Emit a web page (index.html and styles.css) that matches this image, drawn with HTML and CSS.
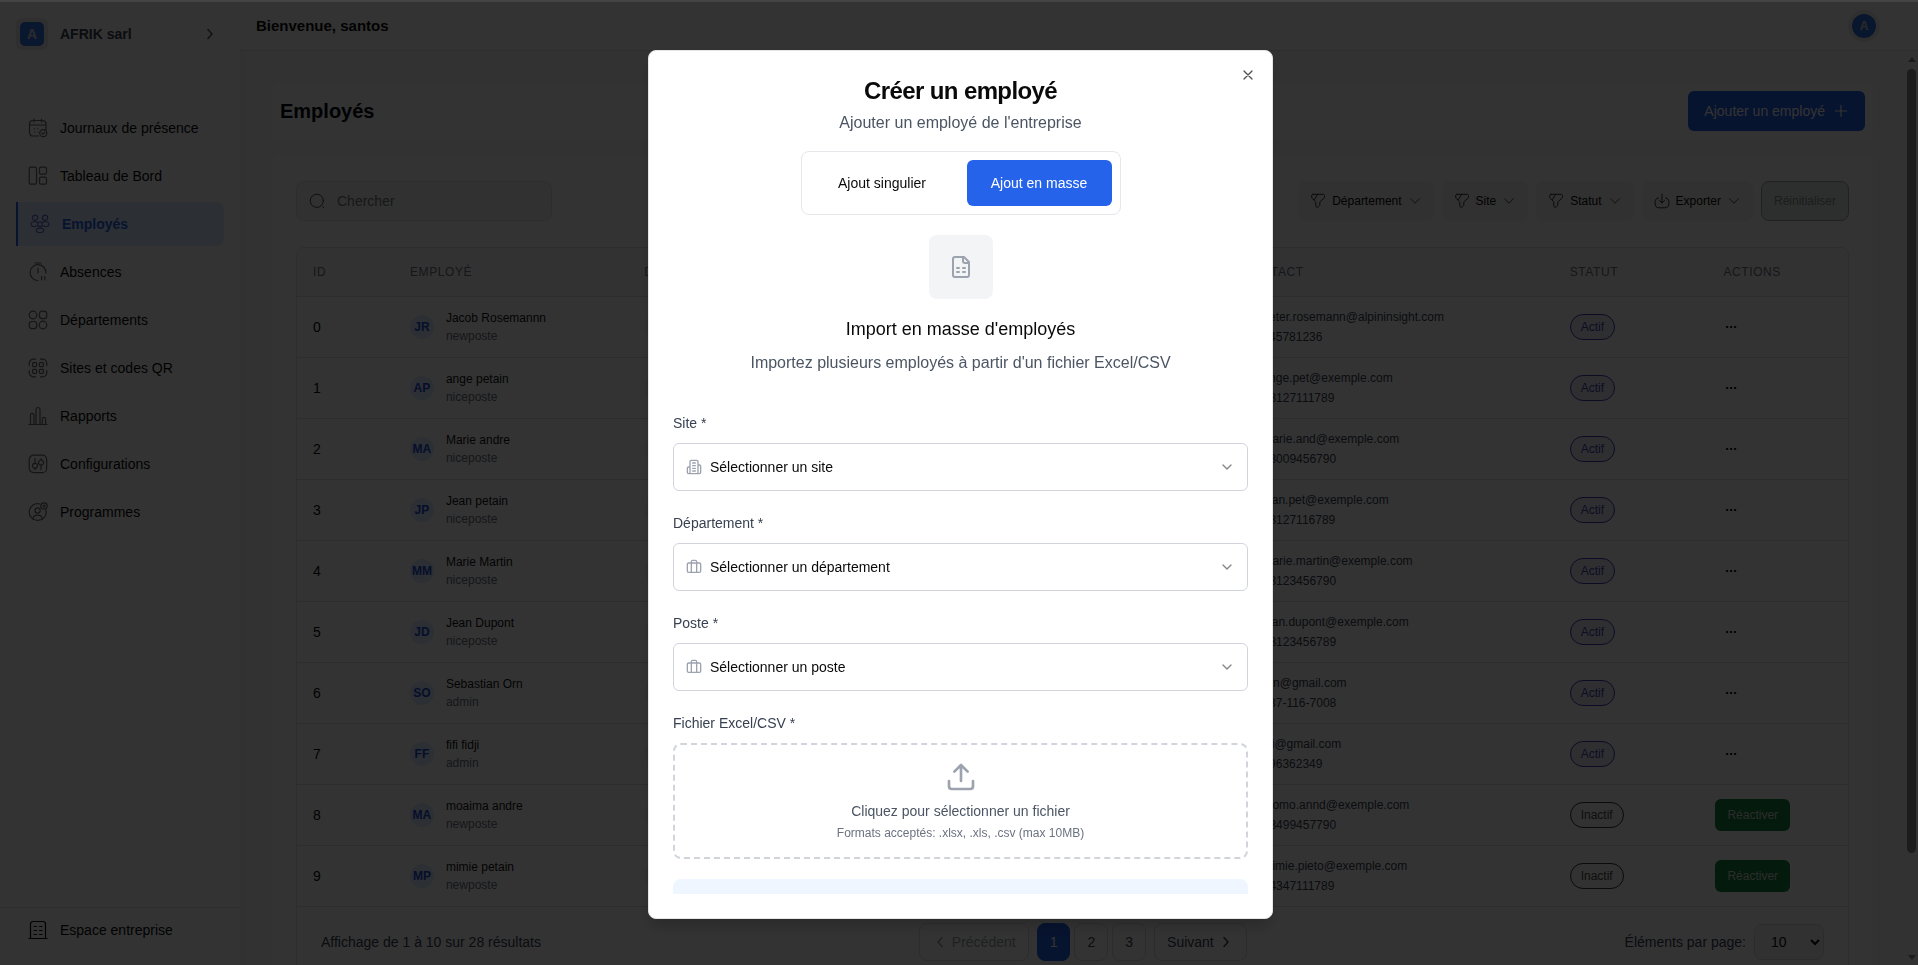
FILE: index.html
```html
<!DOCTYPE html>
<html lang="fr">
<head>
<meta charset="utf-8">
<title>Employés</title>
<link rel="stylesheet" href="styles.css">
</head>
<body>
<svg class="sprite" aria-hidden="true">
  <symbol id="i-calendar" viewBox="0 0 20 20"><path d="M10.500 18H5a3.500 3.500 0 0 1-3.500-3.500V6A3.500 3.500 0 0 1 5 2.500h9.500A3.500 3.500 0 0 1 18 6v5.500M1.500 7H18M6 1v3M13.500 1v3M6.500 10.800h.1M9.800 10.800h.1M6.500 14h.1M9.800 14h.1"/><circle cx="15.200" cy="15.200" r="3.500"/><path d="m13.800 15.200 1 1 1.800-1.900"/></symbol>
  <symbol id="i-layout" viewBox="0 0 20 20"><rect x="1.200" y="1.200" width="7.300" height="17" rx="1.500"/><rect x="11.500" y="1.200" width="7" height="7" rx="1.500"/><rect x="11.500" y="11.200" width="7" height="7" rx="1.500"/></symbol>
  <symbol id="i-team" viewBox="0 0 20 20"><circle cx="5" cy="3.800" r="2.600"/><circle cx="15" cy="3.800" r="2.600"/><circle cx="10" cy="10.200" r="2.300"/><ellipse cx="10" cy="16.300" rx="3.600" ry="2.400"/><path d="M6.500 11.800c-.8.700-1.800.7-2.700.7C2 12.500 1 11.500 1 10s1.500-2.500 3.500-2.500c1.200 0 2.300.4 2.900 1.100M13.500 11.800c.8.700 1.800.7 2.700.7 1.800 0 2.800-1 2.800-2.500s-1.500-2.500-3.500-2.500c-1.200 0-2.300.4-2.900 1.100"/></symbol>
  <symbol id="i-timer" viewBox="0 0 20 20"><path d="M10 18.500A7.900 7.900 0 1 1 17.900 11M7 1h6M10 6v5M13.600 14.500V18M16.800 14.500V18"/></symbol>
  <symbol id="i-depts" viewBox="0 0 20 20"><circle cx="5" cy="5" r="3.800"/><rect x="11.500" y="1.200" width="7.200" height="7.500" rx="2.600"/><rect x="1.200" y="11.500" width="7.500" height="7.200" rx="2.600"/><circle cx="15" cy="15" r="3.800"/></symbol>
  <symbol id="i-qr" viewBox="0 0 20 20"><path d="M1.200 7.500V5.500a4.300 4.300 0 0 1 4.300-4.300h2M12.500 1.200h2a4.300 4.300 0 0 1 4.300 4.300v2M18.800 12.500v2a4.300 4.300 0 0 1-4.300 4.300h-2M7.500 18.800h-2a4.300 4.300 0 0 1-4.300-4.300v-2"/><rect x="4.600" y="4.600" width="4" height="4" rx=".8"/><rect x="11.400" y="4.600" width="4" height="4" rx=".8"/><rect x="4.600" y="11.400" width="4" height="4" rx=".8"/><rect x="11.400" y="11.400" width="4" height="4" rx=".8"/></symbol>
  <symbol id="i-chart" viewBox="0 0 20 20"><path d="M1 18.500h18M2.500 18.500V9a1.700 1.700 0 0 1 3.400 0v9.500M8 18.500V3.500a2 2 0 0 1 4 0v15M14.200 18.500V13a1.700 1.700 0 0 1 3.400 0v5.500"/></symbol>
  <symbol id="i-sliders" viewBox="0 0 20 20"><rect x="1.200" y="1.200" width="17.500" height="17.500" rx="4.500"/><circle cx="7" cy="11.800" r="2.500"/><circle cx="13" cy="8.500" r="2.500"/><path d="M7 4.500v4.800M7 14.300v1.200M13 4.500V6M13 11v4.500"/></symbol>
  <symbol id="i-program" viewBox="0 0 20 20"><path d="M12 2A8.400 8.400 0 1 0 17.800 8"/><circle cx="9.600" cy="8.500" r="2.600"/><path d="M4.800 17c.4-2.600 2.300-3.800 4.800-3.800s4.400 1.200 4.800 3.800"/><circle cx="16" cy="4" r="3.200"/><path d="M14.800 4h2.400M16 2.800v2.400"/></symbol>
  <symbol id="i-company" viewBox="0 0 20 20"><path d="M1 18.500h18M2.500 18.500V4a2.500 2.500 0 0 1 2.500-2.500h10A2.500 2.500 0 0 1 17.500 4v14.500M6 6.500h2.500M11.500 6.500H14M6 10.500h2.500M11.500 10.500H14M6 14.500h2.500M11.500 14.500H14"/></symbol>
  <symbol id="i-right" viewBox="0 0 16 16"><path d="m6 3.500 4 4.500-4 4.500"/></symbol>
  <symbol id="i-left" viewBox="0 0 16 16"><path d="m10 3.500-4 4.500 4 4.500"/></symbol>
  <symbol id="i-down" viewBox="0 0 16 16"><path d="m3 5.500 5 5 5-5"/></symbol>
  <symbol id="i-plus" viewBox="0 0 16 16"><path d="M8 2.500v11M2.500 8h11"/></symbol>
  <symbol id="i-search" viewBox="0 0 16 16"><circle cx="7.800" cy="7.800" r="6.600"/><path d="m13.700 13.700 1.200 1.200"/></symbol>
  <symbol id="i-filter" viewBox="0 0 16 16"><path d="M3 1.300h10c.8 0 1.500.7 1.500 1.500v1c0 .6-.4 1.300-.8 1.700L10.500 8.300c-.4.4-.7 1-.7 1.600v2c0 .4-.3 1-.7 1.200l-1 .9c-1 .6-2.300 0-2.300-1.200V9.800c0-.5-.3-1.100-.6-1.500L2.400 5.500c-.4-.4-.7-1.100-.7-1.500V2.800C1.700 2 2.300 1.300 3 1.300ZM7.500 1.500 4.500 6.500"/></symbol>
  <symbol id="i-export" viewBox="0 0 16 16"><path d="M8 1v9M5.500 7.500 8 10l2.500-2.500M4.500 5C2 5.200 1 6.800 1 9.800c0 3.500 1.200 5 4.500 5h5c3.300 0 4.500-1.500 4.500-5 0-3-1-4.600-3.500-4.800"/></symbol>
  <symbol id="i-dots" viewBox="0 0 16 16"><circle cx="4" cy="8" r=".7"/><circle cx="8" cy="8" r=".7"/><circle cx="12" cy="8" r=".7"/></symbol>
  <symbol id="i-mail" viewBox="0 0 24 24"><rect x="2" y="4" width="20" height="16" rx="2"/><path d="m22 7-10 6L2 7"/></symbol>
  <symbol id="i-phone" viewBox="0 0 24 24"><rect x="6" y="2" width="12" height="20" rx="2"/></symbol>
  <symbol id="i-close" viewBox="0 0 24 24"><path d="M18 6 6 18M6 6l12 12"/></symbol>
  <symbol id="i-sheet" viewBox="0 0 24 24"><path d="M15 2H6a2 2 0 0 0-2 2v16a2 2 0 0 0 2 2h12a2 2 0 0 0 2-2V7ZM14 2v4a2 2 0 0 0 2 2h4M8 13h2M14 13h2M8 17h2M14 17h2"/></symbol>
  <symbol id="i-building" viewBox="0 0 24 24"><path d="M6 22V4a2 2 0 0 1 2-2h8a2 2 0 0 1 2 2v18ZM6 12H4a2 2 0 0 0-2 2v6a2 2 0 0 0 2 2h2M18 9h2a2 2 0 0 1 2 2v9a2 2 0 0 1-2 2h-2M10 6h4M10 10h4M10 14h4M10 18h4"/></symbol>
  <symbol id="i-case" viewBox="0 0 24 24"><path d="M16 20V4a2 2 0 0 0-2-2h-4a2 2 0 0 0-2 2v16"/><rect x="2" y="6" width="20" height="14" rx="2"/></symbol>
  <symbol id="i-chevron" viewBox="0 0 24 24"><path d="m6 9 6 6 6-6"/></symbol>
  <symbol id="i-upload" viewBox="0 0 24 24"><path d="M12 3v12M17 8l-5-5-5 5M21 15v4a2 2 0 0 1-2 2H5a2 2 0 0 1-2-2v-4"/></symbol>
</svg>

<div class="app">
  <aside class="sidebar">
    <button class="company" type="button">
      <span class="company-frame"><span class="company-logo">A</span></span>
      <span class="company-name">AFRIK sarl</span>
      <svg class="icon icon-16"><use href="#i-right"/></svg>
    </button>
    <nav class="nav">
      <a class="nav-item" href="#"><svg class="icon icon-20"><use href="#i-calendar"/></svg>Journaux de présence</a>
      <a class="nav-item" href="#"><svg class="icon icon-20"><use href="#i-layout"/></svg>Tableau de Bord</a>
      <a class="nav-item active" href="#"><svg class="icon icon-20"><use href="#i-team"/></svg>Employés</a>
      <a class="nav-item" href="#"><svg class="icon icon-20"><use href="#i-timer"/></svg>Absences</a>
      <a class="nav-item" href="#"><svg class="icon icon-20"><use href="#i-depts"/></svg>Départements</a>
      <a class="nav-item" href="#"><svg class="icon icon-20"><use href="#i-qr"/></svg>Sites et codes QR</a>
      <a class="nav-item" href="#"><svg class="icon icon-20"><use href="#i-chart"/></svg>Rapports</a>
      <a class="nav-item" href="#"><svg class="icon icon-20"><use href="#i-sliders"/></svg>Configurations</a>
      <a class="nav-item" href="#"><svg class="icon icon-20"><use href="#i-program"/></svg>Programmes</a>
    </nav>
    <div class="sidebar-foot">
      <a class="nav-item strong-icon" href="#"><svg class="icon icon-20"><use href="#i-company"/></svg>Espace entreprise</a>
    </div>
  </aside>

  <div class="main">
    <header class="topbar">
      <p class="welcome">Bienvenue, santos</p>
      <span class="user-frame"><span class="user-avatar">A</span></span>
    </header>

    <div class="viewport">
      <main class="content">
        <section class="card title-card">
          <h1 class="page-title">Employés</h1>
          <button class="add-button" type="button">Ajouter un employé <svg class="icon icon-16"><use href="#i-plus"/></svg></button>
        </section>

        <section class="card list-card">
          <div class="toolbar">
            <label class="search"><svg class="icon icon-16"><use href="#i-search"/></svg><input type="text" placeholder="Chercher" aria-label="Chercher"></label>
            <div class="filters">
              <button class="filter" type="button"><svg class="icon icon-16"><use href="#i-filter"/></svg>Département<svg class="icon icon-14"><use href="#i-down"/></svg></button>
              <button class="filter" type="button"><svg class="icon icon-16"><use href="#i-filter"/></svg>Site<svg class="icon icon-14"><use href="#i-down"/></svg></button>
              <button class="filter" type="button"><svg class="icon icon-16"><use href="#i-filter"/></svg>Statut<svg class="icon icon-14"><use href="#i-down"/></svg></button>
              <button class="filter" type="button"><svg class="icon icon-16"><use href="#i-export"/></svg>Exporter<svg class="icon icon-14"><use href="#i-down"/></svg></button>
              <button class="reset" type="button" disabled>Réinitialiser</button>
            </div>
          </div>

          <div class="table-box">
            <table class="employees">
              <thead>
                <tr><th class="col-id">ID</th><th class="col-employee">Employé</th><th>Département</th><th class="col-contact">Contact</th><th class="col-status">Statut</th><th class="col-actions">Actions</th></tr>
              </thead>
              <tbody>
                <tr><td class="id">0</td><td><div class="person"><span class="avatar">JR</span><div><div class="name">Jacob Rosemannn</div><div class="role">newposte</div></div></div></td><td><span class="dept"></span></td><td><div class="contact"><svg class="icon icon-12"><use href="#i-mail"/></svg>peter.rosemann@alpininsight.com</div><div class="contact"><svg class="icon icon-12"><use href="#i-phone"/></svg>045781236</div></td><td><span class="badge on">Actif</span></td><td><button class="more" type="button" aria-label="Actions"><svg class="icon icon-16"><use href="#i-dots"/></svg></button></td></tr>
                <tr><td class="id">1</td><td><div class="person"><span class="avatar">AP</span><div><div class="name">ange petain</div><div class="role">niceposte</div></div></div></td><td><span class="dept"></span></td><td><div class="contact"><svg class="icon icon-12"><use href="#i-mail"/></svg>ange.pet@exemple.com</div><div class="contact"><svg class="icon icon-12"><use href="#i-phone"/></svg>+3127111789</div></td><td><span class="badge on">Actif</span></td><td><button class="more" type="button" aria-label="Actions"><svg class="icon icon-16"><use href="#i-dots"/></svg></button></td></tr>
                <tr><td class="id">2</td><td><div class="person"><span class="avatar">MA</span><div><div class="name">Marie andre</div><div class="role">niceposte</div></div></div></td><td><span class="dept"></span></td><td><div class="contact"><svg class="icon icon-12"><use href="#i-mail"/></svg>marie.and@exemple.com</div><div class="contact"><svg class="icon icon-12"><use href="#i-phone"/></svg>+3009456790</div></td><td><span class="badge on">Actif</span></td><td><button class="more" type="button" aria-label="Actions"><svg class="icon icon-16"><use href="#i-dots"/></svg></button></td></tr>
                <tr><td class="id">3</td><td><div class="person"><span class="avatar">JP</span><div><div class="name">Jean petain</div><div class="role">niceposte</div></div></div></td><td><span class="dept"></span></td><td><div class="contact"><svg class="icon icon-12"><use href="#i-mail"/></svg>jean.pet@exemple.com</div><div class="contact"><svg class="icon icon-12"><use href="#i-phone"/></svg>+3127116789</div></td><td><span class="badge on">Actif</span></td><td><button class="more" type="button" aria-label="Actions"><svg class="icon icon-16"><use href="#i-dots"/></svg></button></td></tr>
                <tr><td class="id">4</td><td><div class="person"><span class="avatar">MM</span><div><div class="name">Marie Martin</div><div class="role">niceposte</div></div></div></td><td><span class="dept"></span></td><td><div class="contact"><svg class="icon icon-12"><use href="#i-mail"/></svg>marie.martin@exemple.com</div><div class="contact"><svg class="icon icon-12"><use href="#i-phone"/></svg>+3123456790</div></td><td><span class="badge on">Actif</span></td><td><button class="more" type="button" aria-label="Actions"><svg class="icon icon-16"><use href="#i-dots"/></svg></button></td></tr>
                <tr><td class="id">5</td><td><div class="person"><span class="avatar">JD</span><div><div class="name">Jean Dupont</div><div class="role">niceposte</div></div></div></td><td><span class="dept"></span></td><td><div class="contact"><svg class="icon icon-12"><use href="#i-mail"/></svg>jean.dupont@exemple.com</div><div class="contact"><svg class="icon icon-12"><use href="#i-phone"/></svg>+3123456789</div></td><td><span class="badge on">Actif</span></td><td><button class="more" type="button" aria-label="Actions"><svg class="icon icon-16"><use href="#i-dots"/></svg></button></td></tr>
                <tr><td class="id">6</td><td><div class="person"><span class="avatar">SO</span><div><div class="name">Sebastian Orn</div><div class="role">admin</div></div></div></td><td><span class="dept"></span></td><td><div class="contact"><svg class="icon icon-12"><use href="#i-mail"/></svg>orn@gmail.com</div><div class="contact"><svg class="icon icon-12"><use href="#i-phone"/></svg>237-116-7008</div></td><td><span class="badge on">Actif</span></td><td><button class="more" type="button" aria-label="Actions"><svg class="icon icon-16"><use href="#i-dots"/></svg></button></td></tr>
                <tr><td class="id">7</td><td><div class="person"><span class="avatar">FF</span><div><div class="name">fifi fidji</div><div class="role">admin</div></div></div></td><td><span class="dept"></span></td><td><div class="contact"><svg class="icon icon-12"><use href="#i-mail"/></svg>fifi@gmail.com</div><div class="contact"><svg class="icon icon-12"><use href="#i-phone"/></svg>696362349</div></td><td><span class="badge on">Actif</span></td><td><button class="more" type="button" aria-label="Actions"><svg class="icon icon-16"><use href="#i-dots"/></svg></button></td></tr>
                <tr><td class="id">8</td><td><div class="person"><span class="avatar">MA</span><div><div class="name">moaima andre</div><div class="role">newposte</div></div></div></td><td><span class="dept"></span></td><td><div class="contact"><svg class="icon icon-12"><use href="#i-mail"/></svg>momo.annd@exemple.com</div><div class="contact"><svg class="icon icon-12"><use href="#i-phone"/></svg>+3499457790</div></td><td><span class="badge off">Inactif</span></td><td><button class="reactivate" type="button">Réactiver</button></td></tr>
                <tr><td class="id">9</td><td><div class="person"><span class="avatar">MP</span><div><div class="name">mimie petain</div><div class="role">newposte</div></div></div></td><td><span class="dept"></span></td><td><div class="contact"><svg class="icon icon-12"><use href="#i-mail"/></svg>mimie.pieto@exemple.com</div><div class="contact"><svg class="icon icon-12"><use href="#i-phone"/></svg>+4347111789</div></td><td><span class="badge off">Inactif</span></td><td><button class="reactivate" type="button">Réactiver</button></td></tr>
              </tbody>
            </table>
            <div class="pager">
              <p class="pager-info">Affichage de 1 à 10 sur 28 résultats</p>
              <div class="pager-nav">
                <button class="page-step" type="button" disabled><svg class="icon icon-16"><use href="#i-left"/></svg>Précédent</button>
                <div class="pages">
                  <button class="page current" type="button">1</button>
                  <button class="page" type="button">2</button>
                  <button class="page" type="button">3</button>
                </div>
                <button class="page-step" type="button">Suivant<svg class="icon icon-16"><use href="#i-right"/></svg></button>
              </div>
              <div class="page-size">
                <label for="page-size">Éléments par page:</label>
                <select id="page-size"><option>10</option></select>
              </div>
            </div>
          </div>
        </section>
      </main>
      <div class="scrollbar" aria-hidden="true"><span class="arrow up"></span><span class="thumb"></span><span class="arrow down"></span></div>
    </div>
  </div>
</div>

<div class="overlay">
  <div class="modal" role="dialog" aria-modal="true" aria-labelledby="modal-title">
    <button class="close" type="button" aria-label="Fermer"><svg class="icon icon-16"><use href="#i-close"/></svg></button>
    <div class="modal-scroll">
      <h2 class="modal-title" id="modal-title">Créer un employé</h2>
      <p class="modal-text">Ajouter un employé de l'entreprise</p>
      <div class="switch">
        <button class="switch-item" type="button">Ajout singulier</button>
        <button class="switch-item selected" type="button">Ajout en masse</button>
      </div>
      <div class="sheet"><svg class="icon icon-24"><use href="#i-sheet"/></svg></div>
      <h3 class="import-title">Import en masse d'employés</h3>
      <p class="modal-text import-text">Importez plusieurs employés à partir d'un fichier Excel/CSV</p>
      <form class="form">
        <div class="field">
          <label for="site">Site *</label>
          <div class="select-box"><svg class="icon icon-16"><use href="#i-building"/></svg><select id="site"><option>Sélectionner un site</option></select><svg class="icon icon-16 caret"><use href="#i-chevron"/></svg></div>
        </div>
        <div class="field">
          <label for="department">Département *</label>
          <div class="select-box"><svg class="icon icon-16"><use href="#i-case"/></svg><select id="department"><option>Sélectionner un département</option></select><svg class="icon icon-16 caret"><use href="#i-chevron"/></svg></div>
        </div>
        <div class="field">
          <label for="position">Poste *</label>
          <div class="select-box"><svg class="icon icon-16"><use href="#i-case"/></svg><select id="position"><option>Sélectionner un poste</option></select><svg class="icon icon-16 caret"><use href="#i-chevron"/></svg></div>
        </div>
        <div class="field">
          <label for="file">Fichier Excel/CSV *</label>
          <button class="dropzone" id="file" type="button">
            <svg class="icon icon-32"><use href="#i-upload"/></svg>
            <span class="drop-main">Cliquez pour sélectionner un fichier</span>
            <span class="drop-hint">Formats acceptés: .xlsx, .xls, .csv (max 10MB)</span>
          </button>
        </div>
        <div class="notice"></div>
      </form>
    </div>
  </div>
</div>
</body>
</html>
```
FILE: styles.css
```css
*, *::before, *::after { box-sizing: border-box; }

body {
  margin: 0;
  font-family: "Liberation Sans", Arial, sans-serif;
  font-size: 14px;
  line-height: 20px;
  color: #0a0a0a;
  background: #fff;
  overflow: hidden;
}

h1, h2, h3, p { margin: 0; }
button, input, select { font: inherit; color: inherit; margin: 0; }
button { background: none; border: 0; padding: 0; }
a { color: inherit; text-decoration: none; }

.sprite { position: absolute; width: 0; height: 0; }
.icon { flex: none; fill: none; stroke: currentColor; stroke-width: 1.2; stroke-linecap: round; stroke-linejoin: round; }
.icon-12 { width: 12px; height: 12px; }
.icon-14 { width: 14px; height: 14px; }
.icon-16 { width: 16px; height: 16px; }
.icon-20 { width: 20px; height: 20px; }
.icon-24 { width: 24px; height: 24px; }
.icon-32 { width: 32px; height: 32px; }

.app { display: flex; height: 100vh; padding-top: 2px; }

/* Sidebar */
.sidebar { flex: none; width: 240px; display: flex; flex-direction: column; }
.company { display: flex; align-items: center; gap: 12px; padding: 16px 22px 16px 16px; text-align: left; }
.company-frame { padding: 4px; border-radius: 6px; background: #ebebeb; }
.company-logo { display: block; width: 24px; height: 24px; border-radius: 5px; background: #3478e8; color: #d4d8e0; font-weight: 700; line-height: 24px; text-align: center; }
.company-name { flex: 1; font-weight: 700; color: #374151; }
.company .icon { color: #4b5563; stroke-width: 1.5; }
.nav { flex: 1; display: flex; flex-direction: column; gap: 4px; padding: 40px 16px 0; }
.nav-item { display: flex; align-items: center; gap: 12px; height: 44px; padding: 0 12px; }
.nav-item .icon { color: #6a6a6a; }
.nav-item.active { border-left: 2px solid #2563eb; border-radius: 0 8px 8px 0; background: #dbeafe; color: #2563eb; font-weight: 700; }
.nav-item.active .icon { color: #6f6fd0; }
.nav-item.strong-icon .icon { color: #0a0a0a; }
.sidebar-foot { height: 58px; border-top: 1px solid #dedede; padding: 0 16px; }

/* Main column */
.main { flex: 1; min-width: 0; display: flex; flex-direction: column; }
.topbar { flex: none; display: flex; align-items: center; justify-content: space-between; height: 49px; padding: 0 38px 0 16px; border-bottom: 1px solid #dedede; }
.welcome { font-size: 15px; font-weight: 700; }
.user-frame { padding: 4px; border-radius: 50%; background: #ebebeb; }
.user-avatar { display: block; width: 24px; height: 24px; border-radius: 50%; background: #2f74e4; color: #c9cdd5; font-size: 12px; font-weight: 700; line-height: 24px; text-align: center; }
.viewport { flex: 1; min-height: 0; display: flex; background: #fafafa; overflow: hidden; }
.content { flex: 1; min-width: 0; padding: 32px 32px 0 26px; border-left: 6px solid #f2f2f2; }

.card { background: #fff; border-radius: 8px; }
.title-card { display: flex; align-items: center; justify-content: space-between; padding: 8px; }
.page-title { font-size: 20px; line-height: 28px; color: #030712; }
.add-button { display: flex; align-items: center; gap: 8px; height: 40px; padding: 0 16px; border-radius: 6px; background: #2563eb; color: #fff; }
.list-card { margin-top: 16px; padding: 26px 24px 24px; }

.toolbar { display: flex; align-items: center; justify-content: space-between; margin-bottom: 26px; }
.search { display: flex; align-items: center; gap: 12px; width: 256px; height: 40px; padding: 0 12px; border: 1px solid #e2e2e2; border-radius: 8px; background: #f6f6f6; color: #6b7280; }
.search .icon { stroke-width: 1; color: #444; }
.search input { flex: 1; min-width: 0; border: 0; padding: 0; background: none; outline: 0; }
.search input::placeholder { color: #757575; opacity: 1; }
.filters { display: flex; gap: 8px; font-size: 12px; }
.filter { display: flex; align-items: center; gap: 6px; height: 40px; padding: 0 12px; border-radius: 8px; background: #f3f3f3; }
.filter .icon { stroke-width: 1; color: #333; }
.reset { height: 40px; padding: 0 12px; border: 1px solid #a0aba5; border-radius: 8px; background: #e0ebe6; color: #84908a; }

/* Employee table */
.table-box { border: 1px solid #e0e0e0; border-radius: 8px; }
.employees { width: 100%; border-collapse: collapse; table-layout: fixed; }
.employees th { height: 48px; padding: 0 16px; border-bottom: 1px solid #e0e0e0; background: #fafafa; color: #6b7280; font-size: 12px; font-weight: 400; letter-spacing: 0.05em; text-align: left; text-transform: uppercase; }
.employees th:first-child { border-top-left-radius: 8px; }
.employees th:last-child { border-top-right-radius: 8px; }
.employees td { height: 61px; padding: 0 16px; border-bottom: 1px solid #e0e0e0; font-size: 12px; }
.employees .id { font-size: 14px; }
.col-id { width: 6.25%; }
.col-employee { width: 15.1%; }
.col-contact { width: 21.1%; }
.col-status { width: 9.4%; }
.employees .col-actions { width: 9.58%; padding-left: 24px; }
.person { display: flex; align-items: center; gap: 12px; line-height: 18px; }
.avatar { width: 24px; height: 24px; border-radius: 50%; background: #dbeafe; color: #1d4ed8; font-weight: 700; line-height: 24px; text-align: center; }
.name { color: #111; }
.role { color: #6b7280; }
.dept { display: block; width: 96px; height: 24px; border-radius: 12px; background: #f3f4f6; }
.contact { display: flex; align-items: center; gap: 8px; color: #374151; }
.badge { display: inline-block; padding: 2px 10px; border: 1px solid; border-radius: 13px; }
.badge.on { color: #4347a5; border-color: #3a3eb0; background: #e8ebfa; }
.badge.off { color: #4b4b4b; border-color: #333; background: #f8f8f8; }
.more { display: block; padding: 0 8px; }
.more .icon { display: block; fill: currentColor; stroke-width: 1; }
.reactivate { height: 32px; padding: 0 12px; border-radius: 6px; background: #16803d; color: #dcdcdc; }

.pager { display: flex; align-items: center; justify-content: space-between; padding: 16px 24px; color: #374151; }
.pager-nav { display: flex; gap: 8px; }
.pages { display: flex; gap: 4px; }
.page, .page-step { height: 38px; padding: 0 12px; border: 1px solid #dcdcdc; border-radius: 8px; }
.page-step { display: flex; align-items: center; gap: 4px; }
.page-step .icon { stroke-width: 1.5; }
.page-step:disabled { color: #9b9fa6; }
.page.current { border-color: #2563eb; background: #2563eb; color: #fff; }
.page-size { display: flex; align-items: center; gap: 8px; }
.page-size select { width: 70px; height: 36px; padding: 0 12px; border: 1px solid #dcdcdc; border-radius: 8px; background: #f6f6f6; color: #0a0a0a; }

.scrollbar { flex: none; width: 13px; display: flex; flex-direction: column; align-items: center; justify-content: space-between; padding: 6px 0 5px; }
.thumb { width: 9px; margin: 7px 0 102px; flex: 1; border-radius: 5px; background: #8c8c8c; }
.arrow { border: 4px solid transparent; }
.arrow.up { border-top: 0; border-bottom: 5px solid #8c8c8c; }
.arrow.down { border-bottom: 0; border-top: 5px solid #8c8c8c; }

/* Modal */
.overlay { position: fixed; inset: 0; display: flex; align-items: center; justify-content: center; padding: 2px 0 0 3px; border-top: 2px solid #444; background: rgba(0, 0, 0, 0.8); }
.modal { position: relative; width: 90%; max-width: 625px; height: 90vh; padding: 24px; border: 1px solid #e5e5e5; border-radius: 8px; background: #fff; box-shadow: 0 10px 15px -3px rgba(0, 0, 0, 0.2); }
.close { position: absolute; top: 16px; right: 16px; display: flex; opacity: 0.7; }
.modal .icon { stroke-width: 2; }
.modal-scroll { height: 100%; overflow: hidden; }
.modal-title { font-size: 24px; line-height: 32px; letter-spacing: -0.025em; text-align: center; }
.modal-text { margin-top: 4px; font-size: 16px; line-height: 24px; color: #4b5563; text-align: center; }
.switch { display: grid; grid-template-columns: 1fr 1fr; gap: 12px; width: 320px; margin: 16px auto 20px; padding: 8px; border: 1px solid #e5e7eb; border-radius: 8px; }
.switch-item { height: 46px; border-radius: 6px; }
.switch-item.selected { background: #2563eb; color: #fff; }
.sheet { display: flex; align-items: center; justify-content: center; width: 64px; height: 64px; margin: 0 auto 16px; border-radius: 8px; background: #f3f4f6; color: #9ca3af; }
.import-title { font-size: 18px; font-weight: 400; line-height: 28px; text-align: center; }
.import-text { margin: 8px 0 36px; }
.form { display: flex; flex-direction: column; gap: 20px; }
.field { display: flex; flex-direction: column; gap: 8px; }
.field label { line-height: 24px; color: #374151; }
.select-box { display: flex; align-items: center; gap: 8px; height: 48px; padding: 0 12px; border: 1px solid #d1d5db; border-radius: 6px; color: #9ca3af; }
.select-box select { flex: 1; min-width: 0; height: 46px; padding: 0; border: 0; outline: 0; background: none; color: #0a0a0a; appearance: none; }
.caret { color: #858585; }
.dropzone { display: flex; flex-direction: column; align-items: center; padding: 16px; border: 2px dashed #d1d5db; border-radius: 8px; color: #9ca3af; }
.drop-main { margin-top: 8px; color: #4b5563; }
.drop-hint { margin-top: 4px; font-size: 12px; line-height: 16px; color: #6b7280; }
.notice { height: 120px; border-radius: 8px; background: #eff6ff; }
```
